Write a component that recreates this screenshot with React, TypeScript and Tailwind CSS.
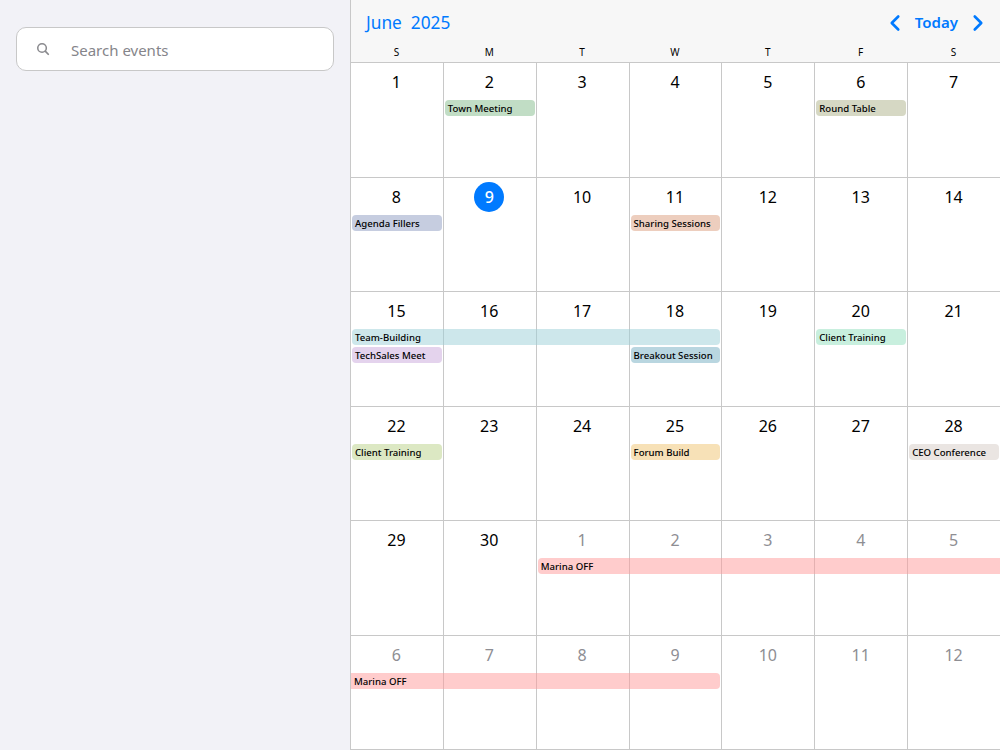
import { ChevronLeft, ChevronRight } from "lucide-react";

type Ev = { label: string; cls: string };
type Week = { days: { n: number; muted?: boolean; today?: boolean }[]; events: Ev[] };

const run = (start: number, count: number, muted = false) =>
  Array.from({ length: count }, (_, i) => ({ n: start + i, muted }));

const weeks: Week[] = [
  {
    days: run(1, 7),
    events: [
      { label: "Town Meeting", cls: "col-start-2 row-start-1 ml-px mr-[2px] rounded-[4px] bg-[#84bc8c]/50" },
      { label: "Round Table", cls: "col-start-6 row-start-1 ml-px mr-[2px] rounded-[4px] bg-[#adb18a]/50" },
    ],
  },
  {
    days: [{ n: 8 }, { n: 9, today: true }, { n: 10 }, { n: 11 }, { n: 12 }, { n: 13 }, { n: 14 }],
    events: [
      { label: "Agenda Fillers", cls: "col-start-1 row-start-1 ml-px mr-[2px] rounded-[4px] bg-[#8e9bc1]/50" },
      { label: "Sharing Sessions", cls: "col-start-4 row-start-1 ml-px mr-[2px] rounded-[4px] bg-[#dc9d7e]/50" },
    ],
  },
  {
    days: run(15, 7),
    events: [
      { label: "Team-Building", cls: "col-start-1 col-span-4 row-start-1 ml-px mr-[2px] rounded-[4px] bg-[#9bcfd7]/50" },
      { label: "Client Training", cls: "col-start-6 row-start-1 ml-px mr-[2px] rounded-[4px] bg-[#91dfbd]/50" },
      { label: "TechSales Meet", cls: "col-start-1 row-start-2 ml-px mr-[2px] rounded-[4px] bg-[#c9a8dc]/50" },
      { label: "Breakout Session", cls: "col-start-4 row-start-2 ml-px mr-[2px] rounded-[4px] bg-[#73adc1]/50" },
    ],
  },
  {
    days: run(22, 7),
    events: [
      { label: "Client Training", cls: "col-start-1 row-start-1 ml-px mr-[2px] rounded-[4px] bg-[#b9d287]/50" },
      { label: "Forum Build", cls: "col-start-4 row-start-1 ml-px mr-[2px] rounded-[4px] bg-[#efc46f]/50" },
      { label: "CEO Conference", cls: "col-start-7 row-start-1 ml-px mr-[2px] rounded-[4px] bg-[#d6cbc5]/50" },
    ],
  },
  {
    days: [{ n: 29 }, { n: 30 }, ...run(1, 5, true)],
    events: [
      { label: "Marina OFF", cls: "col-start-3 col-span-5 row-start-1 ml-px rounded-l-[4px] bg-[#ff9999]/50" },
    ],
  },
  {
    days: run(6, 7, true),
    events: [
      { label: "Marina OFF", cls: "col-start-1 col-span-4 row-start-1 mr-[2px] rounded-r-[4px] bg-[#ff9999]/50" },
    ],
  },
];

const labels = ["S", "M", "T", "W", "T", "F", "S"];

export default function App() {
  return (
    <div className="flex h-screen w-full overflow-hidden bg-white font-['Noto_Sans','Open_Sans',sans-serif] text-black">
      <aside className="w-[351px] shrink-0 border-r border-[#c8c8c8] bg-[#f2f2f7] px-4 pt-[27px]">
        <label className="flex h-11 w-[318px] items-center rounded-[10px] border border-[#c8c8c8] bg-white pl-[19px]">
          <svg viewBox="0 0 512 512" className="h-[14px] w-[14px] shrink-0 text-[#8a8a8e]" fill="none" stroke="currentColor">
            <path d="M221 64a157 157 0 1 0 0 314 157 157 0 0 0 0-314z" strokeWidth="56" />
            <path d="M338 338l110 110" strokeWidth="64" strokeLinecap="round" />
          </svg>
          <input
            placeholder="Search events"
            className="ml-[21px] w-full translate-y-px bg-transparent text-[15px] text-black outline-none placeholder:text-[#85858a]"
          />
        </label>
      </aside>

      <main className="flex w-[650px] min-w-[650px] shrink-0 flex-col">
        <header className="h-[63px] shrink-0 border-b border-[#c8c8c8] bg-[#f7f7f7]">
          <div className="flex h-[45px] items-center pl-[15px] pr-[10px] text-[#007aff]">
            <h1 className="whitespace-pre text-[17.3px] font-normal">June  2025</h1>
            <div className="ml-auto flex items-center">
              <ChevronLeft className="h-[26px] w-[26px]" strokeWidth={2.4} />
              <span className="mx-[7px] text-[15px] font-semibold">Today</span>
              <ChevronRight className="h-[26px] w-[26px]" strokeWidth={2.4} />
            </div>
          </div>
          <div className="grid grid-cols-7">
            {labels.map((l, i) => (
              <div key={i} className="pr-[2px] text-center text-[10px] leading-[14px]">
                {l}
              </div>
            ))}
          </div>
        </header>

        <div className="grid min-h-0 flex-1 grid-rows-6">
          {weeks.map((w, wi) => (
            <section key={wi} className="relative grid grid-cols-7 border-b border-[#c8c8c8]">
              {w.days.map((d, di) => (
                <div key={di} className="flex justify-center border-r border-[#c8c8c8] pr-px pt-[4px]">
                  <span
                    className={`flex h-[30px] w-[30px] items-center justify-center rounded-full text-[16px] ${
                      d.today ? "bg-[#007aff] font-medium text-white" : d.muted ? "text-[#8e8e93]" : "text-black"
                    }`}
                  >
                    {d.n}
                  </span>
                </div>
              ))}
              <div className="pointer-events-none absolute inset-x-0 top-[37px] grid grid-cols-7 grid-rows-[16px_16px] gap-y-[2px]">
                {w.events.map((e, ei) => (
                  <div key={ei} className={`flex items-center overflow-hidden whitespace-nowrap pl-[3px] pt-px text-[9.6px] font-medium leading-[15px] text-black ${e.cls}`}>
                    {e.label}
                  </div>
                ))}
              </div>
            </section>
          ))}
        </div>
      </main>
    </div>
  );
}
